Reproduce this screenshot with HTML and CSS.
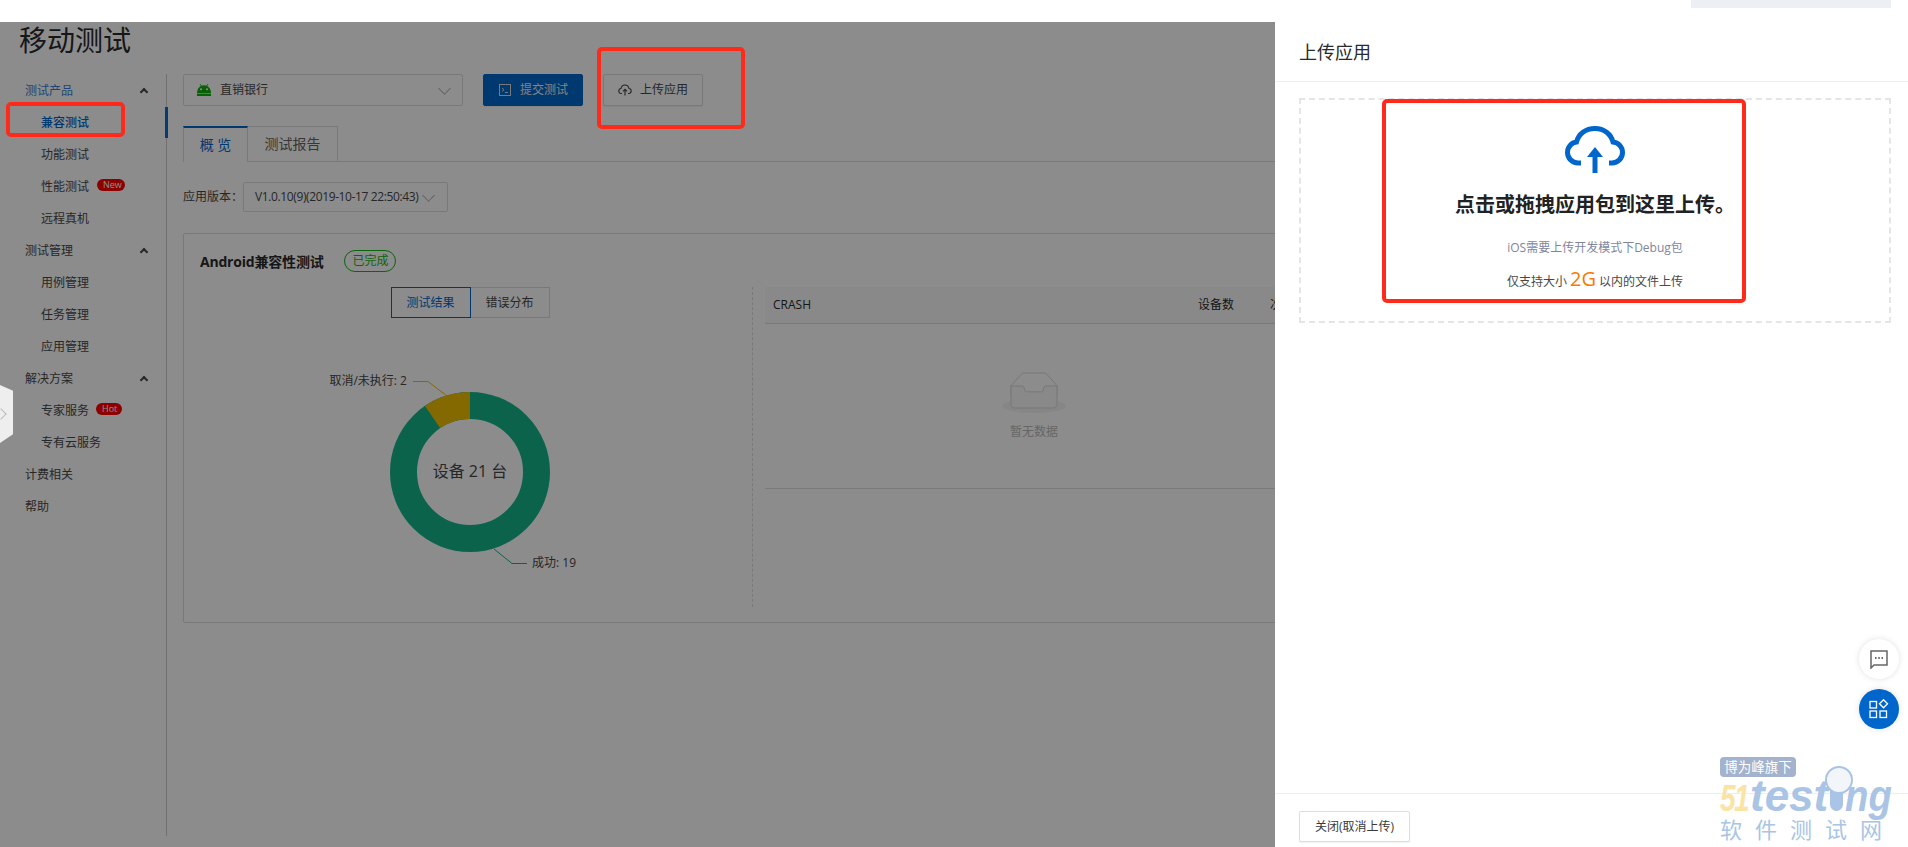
FILE: index.html
```html
<!DOCTYPE html>
<html lang="zh-CN">
<head>
  <meta charset="UTF-8" />
  <title>移动测试</title>
  <link rel="stylesheet" href="styles.css">
</head>
<body>
  <!-- top strip of the site, mostly cut off -->
  <div class="topbar"><div class="topbar-box"></div></div>

  <div class="page">
    <h1 class="page-title">移动测试</h1>
    <div class="page-body">

      <!-- Left menu -->
      <nav class="sidebar">
        <div class="menu-group menu-group-on">测试产品<span class="menu-arrow"></span></div>
        <div class="menu-item menu-item-on">兼容测试</div>
        <div class="menu-item">功能测试</div>
        <div class="menu-item">性能测试<span class="tag tag-new">New</span></div>
        <div class="menu-item">远程真机</div>
        <div class="menu-group">测试管理<span class="menu-arrow"></span></div>
        <div class="menu-item">用例管理</div>
        <div class="menu-item">任务管理</div>
        <div class="menu-item">应用管理</div>
        <div class="menu-group">解决方案<span class="menu-arrow"></span></div>
        <div class="menu-item">专家服务<span class="tag tag-hot">Hot</span></div>
        <div class="menu-item">专有云服务</div>
        <div class="menu-group">计费相关</div>
        <div class="menu-group">帮助</div>
      </nav>

      <main class="content">
        <div class="toolbar">
          <div class="app-select">
            <svg class="android-icon" viewBox="0 0 14 12" width="14" height="12">
              <path d="M3 0l1.300 2M11 0L9.700 2" stroke="#12b012" stroke-width=".9" fill="none"/>
              <path d="M0 9.200C0 4.500 3 1.300 7 1.300S14 4.500 14 9.200z" fill="#12b012"/>
              <circle cx="4" cy="5.300" r="1" fill="#fff"/>
              <circle cx="10" cy="5.300" r="1" fill="#fff"/>
              <rect x="0" y="9.800" width="14" height="2.200" fill="#12b012"/>
            </svg>
            <span class="app-name">直销银行</span>
            <span class="caret"></span>
          </div>
          <button class="btn btn-primary">
            <svg viewBox="0 0 14 14" width="14" height="14" fill="none" stroke="#ddd">
              <rect x="1.500" y="1.500" width="11" height="11"/>
              <path d="M4 5l2 1.700L4 8.400M7 9.500h3"/>
            </svg>
            提交测试
          </button>
          <button class="btn">
            <svg viewBox="0 0 14 12" width="14" height="12" fill="none" stroke="#444" stroke-width="1.100">
              <path d="M4 9.500H3.400C2 9.500 .8 8.400 .8 7S1.800 4.600 3 4.500C3.400 2.500 5 1 7 1s3.600 1.500 4 3.500c1.200.1 2.200 1.100 2.200 2.500S12 9.500 10.600 9.500H10"/>
              <path d="M7 11.500V5.500M5 7.300l2-2 2 2"/>
            </svg>
            上传应用
          </button>
        </div>

        <div class="tabs">
          <div class="tab tab-on">概 览</div>
          <div class="tab">测试报告</div>
        </div>

        <div class="version-row">
          <span>应用版本：</span>
          <div class="version-select"><span class="version-text">V1.0.10(9)(2019-10-17 22:50:43)</span><span class="caret"></span></div>
        </div>

        <section class="card">
          <div class="card-head">
            <span class="card-title">Android兼容性测试</span>
            <span class="status">已完成</span>
          </div>
          <div class="card-body">
            <div class="chart-col">
              <div class="segment">
                <div class="segment-item segment-on">测试结果</div>
                <div class="segment-item">错误分布</div>
              </div>
              <svg class="donut" viewBox="188 320 564 287" width="564" height="287">
                <circle cx="470" cy="472" r="66.500" fill="none" stroke="#16b58a" stroke-width="27"/>
                <path d="M470 392A80 80 0 0 0 425 405.900L440.100 428A53 53 0 0 1 470 419z" fill="#f0c000"/>
                <path d="M413 381.500H428L447 396" fill="none" stroke="#f0c000"/>
                <path d="M494 549L512 563.500H527" fill="none" stroke="#16b58a"/>
                <text class="donut-label" x="407" y="385" text-anchor="end">取消/未执行: 2</text>
                <text class="donut-label" x="532" y="567">成功: 19</text>
                <text class="donut-center" x="470" y="477" text-anchor="middle">设备 21 台</text>
              </svg>
            </div>
            <div class="crash-table">
              <div class="crash-head">
                <span>CRASH</span>
                <span>设备数</span>
                <span>次数</span>
              </div>
              <div class="crash-empty">
                <svg viewBox="0 0 64 41" width="64" height="41">
                  <g transform="translate(0 1)" fill="none">
                    <ellipse fill="#f5f5f5" cx="32" cy="33" rx="32" ry="7"/>
                    <g stroke="#d9d9d9">
                      <path d="M55 12.760L44.854 1.258C44.367.474 43.656 0 42.907 0H21.093c-.749 0-1.460.474-1.947 1.257L9 12.761V22h46v-9.240z"/>
                      <path d="M41.613 15.931c0-1.605.994-2.930 2.227-2.931H55v18.137C55 33.260 53.680 35 52.050 35h-40.100C10.320 35 9 33.259 9 31.137V13h11.160c1.233 0 2.227 1.323 2.227 2.928v.022c0 1.605 1.005 2.901 2.237 2.901h14.752c1.232 0 2.237-1.308 2.237-2.913v-.007z" fill="#fafafa"/>
                    </g>
                  </g>
                </svg>
                <div class="empty-text">暂无数据</div>
              </div>
            </div>
          </div>
        </section>
      </main>
    </div>
  </div>

  <div class="mask"></div>

  <!-- little tab on the left edge -->
  <div class="side-tab"><span class="side-tab-arrow"></span></div>

  <!-- Upload drawer -->
  <aside class="drawer">
    <div class="drawer-head">上传应用</div>
    <div class="drawer-body">
      <div class="dropzone">
        <svg class="cloud" viewBox="0 0 60 47" width="60" height="47" fill="none">
          <path d="M16 37H13C7 37 2.500 32 2.500 26.500C2.500 21 6.500 16.500 11.500 16C13.500 8 20.500 2.500 30 2.500C39 2.500 46 8 48 16C53.500 16.500 57.500 21 57.500 26.500C57.500 32 53 37 47 37H44" stroke="#0066cc" stroke-width="5"/>
          <path d="M30 47V28" stroke="#0066cc" stroke-width="5"/>
          <path d="M30 21L38 31H22z" fill="#0066cc"/>
        </svg>
        <div class="drop-title">点击或拖拽应用包到这里上传。</div>
        <div class="drop-hint">iOS需要上传开发模式下Debug包</div>
        <div class="drop-limit">仅支持大小 <span class="drop-size">2G</span> 以内的文件上传</div>
      </div>
    </div>
    <div class="drawer-foot">
      <button class="btn-close">关闭(取消上传)</button>
    </div>
  </aside>

  <!-- floating buttons -->
  <div class="float-btns">
    <div class="float-btn">
      <svg viewBox="0 0 20 20" width="20" height="20" fill="none" stroke="#666" stroke-width="1.500">
        <path d="M2 2h16v14H5l-3 3z"/>
        <path d="M6 9h1.500M9.250 9h1.500M12.500 9H14" stroke-width="2"/>
      </svg>
    </div>
    <div class="float-btn float-btn-blue">
      <svg viewBox="0 0 20 20" width="20" height="20" fill="none" stroke="#fff" stroke-width="1.300">
        <rect x="1" y="2.500" width="6.500" height="6.500"/>
        <path d="M14.500 .8l4 4-4 4-4-4z"/>
        <rect x="1" y="12" width="6.500" height="6.500"/>
        <rect x="11" y="12" width="6.500" height="6.500"/>
      </svg>
    </div>
  </div>

  <!-- Red marks drawn on the screenshot -->
  <div class="mark mark-menu"></div>
  <div class="mark mark-upload"></div>
  <div class="mark mark-drop"></div>

  <!-- Watermark -->
  <div class="watermark">
    <div class="wm-badge">博为峰旗下</div>
    <div class="wm-logo"><span class="wm-51">51</span><span class="wm-test">test</span><span class="wm-i"></span><span class="wm-test wm-ng">ng</span></div>
    <div class="wm-cn">软件测试网</div>
  </div>
</body>
</html>
```

FILE: styles.css
```css
/* ===== Base ===== */
* { box-sizing: border-box; }

html, body {
  margin: 0;
  height: 847px;
  overflow: hidden;
}

body {
  position: relative;
  background: #fff;
  color: #484848;
  font: 12px/1.5 "Open Sans", "Noto Sans CJK SC", sans-serif;
}

.topbar {
  height: 22px;
  display: flex;
  justify-content: flex-end;
  padding-right: 17px;
}

.topbar-box {
  width: 200px;
  height: 8px;
  background: #eceff3;
}

.page-title {
  margin: 0 0 16px;
  padding-left: 19px;
  font-size: 28px;
  font-weight: 400;
  line-height: 36px;
  color: #2a2a2a;
}

.page-body { display: flex; }

/* ===== Sidebar ===== */
.sidebar {
  width: 167px;
  height: 762px;
  flex: none;
  padding-top: 1px;
  border-right: 1px solid #ccc;
}

.menu-group, .menu-item {
  position: relative;
  height: 32px;
  line-height: 32px;
}

.menu-group { padding-left: 25px; }
.menu-group-on { color: #3b7fd0; }
.menu-item { padding-left: 41px; }
.menu-item-on { color: #0066cc; font-weight: 500; }

.menu-item-on::after {
  content: "";
  position: absolute;
  right: -2px;
  top: 0;
  width: 3px;
  height: 31px;
  background: #0a6ed1;
}

.menu-arrow {
  position: absolute;
  left: 141px;
  top: 14px;
  width: 6px;
  height: 6px;
  border-left: 2px solid #484848;
  border-top: 2px solid #484848;
  transform: rotate(45deg);
}

.tag {
  position: absolute;
  top: 8px;
  height: 12px;
  padding: 0 6px;
  border-radius: 6px;
  background: #f00;
  color: #fff;
  font-size: 9px;
  line-height: 12px;
}

.tag-new { left: 97px; width: 28px; }
.tag-hot { left: 96px; width: 26px; }

/* ===== Content ===== */
.content {
  width: 1140px;
  margin-left: 16px;
  flex: none;
}

.toolbar {
  display: flex;
  gap: 20px;
  height: 32px;
}

.app-select {
  width: 280px;
  display: flex;
  align-items: center;
  padding: 0 13px;
  border: 1px solid #ddd;
  border-radius: 2px;
  background: #fff;
}

.android-icon { margin-right: 9px; }
.app-name { flex: 1; }

.caret {
  display: inline-block;
  flex: none;
  width: 9px;
  height: 9px;
  margin-bottom: 4px;
  border-right: 1px solid #b5b5b5;
  border-bottom: 1px solid #b5b5b5;
  transform: rotate(45deg);
}

.btn {
  width: 100px;
  display: flex;
  align-items: center;
  justify-content: center;
  gap: 8px;
  padding: 0;
  border: 1px solid #ddd;
  border-radius: 2px;
  background: #fff;
  color: #484848;
  font: inherit;
  box-shadow: 0 1px 1px rgba(0, 0, 0, 0.06);
}

.btn-primary {
  background: #0066cc;
  border-color: #0066cc;
  color: #eee;
}

/* ===== Tabs ===== */
.tabs {
  display: flex;
  height: 36px;
  margin-top: 20px;
  border-bottom: 1px solid #ddd;
}

.tab {
  height: 35px;
  padding: 0 16px;
  border: 1px solid #ddd;
  border-bottom: 0;
  border-left: 0;
  font-size: 14px;
  line-height: 34px;
  color: #666;
  width: 90px;
  text-align: center;
}

.tab-on {
  width: 65px;
  height: 36px;
  padding: 0;
  border-left: 1px solid #ddd;
  border-top: 2px solid #0066cc;
  color: #0066cc;
  background: #fff;
}

/* ===== Version ===== */
.version-row {
  display: flex;
  align-items: center;
  height: 30px;
  margin-top: 20px;
}

.version-row > span { width: 60px; }

.version-select {
  width: 205px;
  height: 30px;
  display: flex;
  align-items: center;
  justify-content: space-between;
  padding: 0 14px 0 11px;
  border: 1px solid #ddd;
  border-radius: 2px;
  white-space: nowrap;
}

.version-text { letter-spacing: -.38px; }

/* ===== Card ===== */
.card {
  height: 390px;
  margin-top: 21px;
  border: 1px solid #ddd;
  border-radius: 2px;
}

.card-head {
  display: flex;
  align-items: center;
  height: 22px;
  margin-top: 16px;
  padding-left: 16px;
}

.card-title {
  font-size: 14px;
  font-weight: 700;
  letter-spacing: -.2px;
  color: #2a2a2a;
}

.status {
  width: 52px;
  height: 22px;
  margin-left: 21px;
  border: 1px solid #14b814;
  border-radius: 11px;
  color: #14b814;
  line-height: 20px;
  text-align: center;
}

.card-body {
  display: flex;
  margin-top: 15px;
}

.chart-col {
  width: 569px;
  height: 320px;
  padding-left: 4px;
  border-right: 1px dashed #ddd;
}

.segment {
  display: flex;
  justify-content: center;
  height: 31px;
}

.segment-item {
  width: 79px;
  border: 1px solid #ddd;
  border-left: 0;
  line-height: 29px;
  text-align: center;
}

.segment-on {
  width: 80px;
  border: 1px solid #0066cc;
  color: #0066cc;
}

.donut { display: block; margin-top: 2px; }
.donut-label { font-size: 12px; fill: #484848; }
.donut-center { font-size: 16px; fill: #484848; }

/* ===== Crash table ===== */
.crash-table {
  width: 538px;
  margin-left: 12px;
  height: 202px;
  border-bottom: 1px solid #ddd;
}

.crash-head {
  display: grid;
  grid-template-columns: 425px 72px auto;
  height: 37px;
  padding-left: 8px;
  background: #fafafa;
  border-bottom: 1px solid #ddd;
  line-height: 36px;
  color: #2a2a2a;
}

.crash-empty {
  display: flex;
  flex-direction: column;
  align-items: center;
  padding-top: 48px;
}

.empty-text {
  margin-top: 10px;
  color: #bbb;
  line-height: 18px;
}

/* ===== Mask & side tab ===== */
.mask {
  position: absolute;
  top: 22px;
  left: 0;
  right: 0;
  bottom: 0;
  background: rgba(0, 0, 0, 0.45);
}

.side-tab {
  position: absolute;
  left: 0;
  top: 385px;
  width: 13px;
  height: 58px;
  background: #eee;
  clip-path: polygon(0 0, 100% 10%, 100% 85%, 0 100%);
}

.side-tab-arrow {
  position: absolute;
  left: -3px;
  top: 25px;
  width: 8px;
  height: 8px;
  border-top: 1px solid #bbb;
  border-right: 1px solid #bbb;
  transform: rotate(45deg);
}

/* ===== Drawer ===== */
.drawer {
  position: absolute;
  top: 22px;
  left: 1275px;
  right: 0;
  bottom: 0;
  display: flex;
  flex-direction: column;
  background: #fff;
}

.drawer-head {
  height: 60px;
  padding: 0 24px;
  border-bottom: 1px solid #eceff1;
  font-size: 18px;
  line-height: 61px;
  color: #2a2a2a;
}

.drawer-body {
  flex: 1;
  padding: 16px 17px 0 24px;
}

.dropzone {
  height: 225px;
  display: flex;
  flex-direction: column;
  align-items: center;
  padding-top: 26px;
  border: 2px dashed #e3e6e9;
  text-align: center;
}

.cloud { flex: none; }

.drop-title {
  margin-top: 17px;
  font-size: 20px;
  font-weight: 700;
  line-height: 30px;
  color: #222;
}

.drop-hint {
  margin-top: 19px;
  color: #7f869b;
  line-height: 18px;
}

.drop-limit {
  height: 26px;
  margin-top: 9px;
  line-height: 26px;
}

.drop-size {
  font-size: 20px;
  color: #f57c00;
}

.drawer-foot {
  height: 54px;
  padding: 17px 24px 0;
  border-top: 1px solid #eceff1;
}

.btn-close {
  width: 111px;
  height: 31px;
  padding: 0;
  border: 1px solid #ddd;
  border-radius: 2px;
  background: #fff;
  color: #3a3a3a;
  font: inherit;
  box-shadow: 0 1px 1px rgba(0, 0, 0, 0.06);
}

/* ===== Floating buttons ===== */
.float-btns {
  position: absolute;
  left: 1859px;
  top: 639px;
  display: flex;
  flex-direction: column;
  gap: 10px;
}

.float-btn {
  width: 40px;
  height: 40px;
  display: flex;
  align-items: center;
  justify-content: center;
  border-radius: 50%;
  background: #fff;
  box-shadow: 0 0 6px rgba(0, 0, 0, 0.12);
}

.float-btn-blue { background: #0066cc; }

/* ===== Red marks ===== */
.mark {
  position: absolute;
  border: 4px solid #ff2a1a;
  border-radius: 5px;
}

.mark-menu { left: 6px; top: 102px; width: 119px; height: 35px; }
.mark-upload { left: 597px; top: 47px; width: 148px; height: 82px; }
.mark-drop { left: 1382px; top: 99px; width: 364px; height: 204px; }

/* ===== Watermark ===== */
.watermark {
  position: absolute;
  left: 1720px;
  top: 757px;
  width: 176px;
}

.wm-badge {
  width: 76px;
  height: 20px;
  border-radius: 4px;
  background: #a3b2cd;
  color: #fff;
  font-size: 13.500px;
  line-height: 20px;
  text-align: center;
}

.wm-logo {
  display: flex;
  align-items: baseline;
  height: 39px;
  margin-top: -1px;
  font-family: "Liberation Sans", sans-serif;
  font-weight: 700;
  font-style: italic;
  line-height: 39px;
}

.wm-51 {
  width: 30px;
  font-size: 36px;
  letter-spacing: -2px;
  color: #fbe3a6;
  transform: scaleX(.78);
  transform-origin: left;
}

.wm-test {
  width: 78px;
  font-size: 44px;
  color: #a9c4e4;
}

.wm-ng {
  width: 47px;
  transform: scaleX(.87);
  transform-origin: left;
}

.wm-i {
  position: relative;
  width: 13px;
  height: 27px;
  margin: 0 2px;
  border-radius: 0 0 7px 7px;
  background: #a9c4e4;
}

.wm-i::before {
  content: "";
  position: absolute;
  left: -5px;
  top: -18px;
  width: 24px;
  height: 24px;
  border: 2px solid #a9c4e4;
  border-radius: 50%;
  background: #f2f6fb;
}

.wm-cn {
  margin-top: 1px;
  font-size: 22px;
  line-height: 26px;
  letter-spacing: 13px;
  color: #a9c4e4;
  white-space: nowrap;
}
```
